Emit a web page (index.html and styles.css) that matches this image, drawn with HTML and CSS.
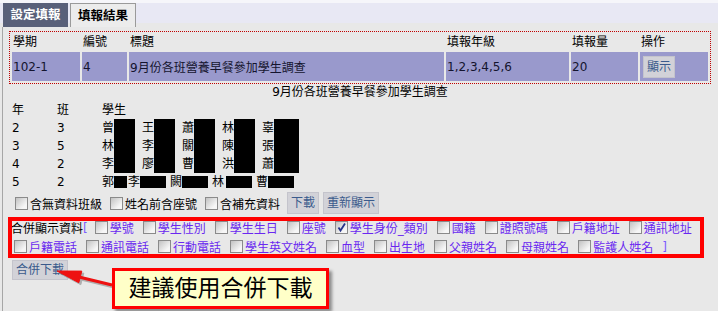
FILE: index.html
```html
<!DOCTYPE html>
<html>
<head>
<meta charset="utf-8">
<title>填報結果</title>
<link rel="stylesheet" href="styles.css">
</head>
<body>
<div class="tabs">
  <a class="tab" href="#set">設定填報</a>
  <a class="tab active" href="#result">填報結果</a>
</div>
<div class="panel">
  <table class="survey">
    <colgroup>
      <col class="c-term"><col class="c-no"><col class="c-title"><col class="c-grade"><col class="c-qty"><col class="c-op">
    </colgroup>
    <tr class="head">
      <td>學期</td><td>編號</td><td>標題</td><td>填報年級</td><td>填報量</td><td>操作</td>
    </tr>
    <tr class="data">
      <td>102-1</td><td>4</td><td>9月份各班營養早餐參加學生調查</td><td>1,2,3,4,5,6</td><td>20</td>
      <td><button class="btn">顯示</button></td>
    </tr>
  </table>

  <div class="caption">9月份各班營養早餐參加學生調查</div>

  <table class="students">
    <tr><td class="c-y">年</td><td class="c-y">班</td><td>學生</td></tr>
    <tr><td>2</td><td>3</td><td>
      <span class="nm">曾<i class="mask"></i></span><span class="nm">王<i class="mask"></i></span><span class="nm">蕭<i class="mask"></i></span><span class="nm">林<i class="mask"></i></span><span class="nm">辜<i class="mask wide"></i></span>
    </td></tr>
    <tr><td>3</td><td>5</td><td>
      <span class="nm">林<i class="mask"></i></span><span class="nm">李<i class="mask"></i></span><span class="nm">關<i class="mask"></i></span><span class="nm">陳<i class="mask"></i></span><span class="nm">張<i class="mask wide"></i></span>
    </td></tr>
    <tr><td>4</td><td>2</td><td>
      <span class="nm">李<i class="mask"></i></span><span class="nm">廖<i class="mask"></i></span><span class="nm">曹<i class="mask"></i></span><span class="nm">洪<i class="mask"></i></span><span class="nm">蕭<i class="mask wide"></i></span>
    </td></tr>
    <tr class="short"><td>5</td><td>2</td><td>
      <span class="nm s1">郭<i class="mask"></i></span><span class="nm s2">李<i class="mask"></i></span><span class="nm s2">闕<i class="mask"></i></span><span class="nm s3">林<i class="mask"></i></span><span class="nm s2">曹<i class="mask"></i></span>
    </td></tr>
  </table>

  <div class="opts">
    <label class="it"><span class="cb"></span>含無資料班級</label>
    <label class="it"><span class="cb"></span>姓名前含座號</label>
    <label class="it"><span class="cb"></span>含補充資料</label>
    <button class="btn tall">下載</button>
    <button class="btn tall">重新顯示</button>
  </div>

  <div class="merge">
    <div class="line first">
      <span class="lead">合併顯示資料</span><span class="br">[</span>
      <label class="it"><span class="cb"></span>學號</label>
      <label class="it"><span class="cb"></span>學生性別</label>
      <label class="it"><span class="cb"></span>學生生日</label>
      <label class="it"><span class="cb"></span>座號</label>
      <label class="it"><span class="cb on"><svg viewBox="0 0 11 11" width="11" height="11"><path d="M2.5 5.5 L4.5 8.5 L9 1.5" fill="none" stroke="#27348b" stroke-width="1.8"/></svg></span>學生身份_類別</label>
      <label class="it"><span class="cb"></span>國籍</label>
      <label class="it"><span class="cb"></span>證照號碼</label>
      <label class="it"><span class="cb"></span>戶籍地址</label>
      <label class="it"><span class="cb"></span>通訊地址</label>
    </div>
    <div class="line second">
      <label class="it"><span class="cb"></span>戶籍電話</label>
      <label class="it"><span class="cb"></span>通訊電話</label>
      <label class="it"><span class="cb"></span>行動電話</label>
      <label class="it"><span class="cb"></span>學生英文姓名</label>
      <label class="it"><span class="cb"></span>血型</label>
      <label class="it"><span class="cb"></span>出生地</label>
      <label class="it"><span class="cb"></span>父親姓名</label>
      <label class="it"><span class="cb"></span>母親姓名</label>
      <label class="it"><span class="cb"></span>監護人姓名</label>
      <span class="br">]</span>
    </div>
  </div>

  <button class="btn merge-dl">合併下載</button>
</div>

<!-- annotation -->
<svg class="arrow" viewBox="0 0 70 36" width="70" height="36">
  <g transform="translate(2 2)" fill="#8a8a8a" stroke="#8a8a8a" opacity="0.6">
    <polygon points="7,13 31.8,13.1 28.8,24.7"/>
    <line x1="29" y1="19" x2="62" y2="27" stroke-width="3"/>
  </g>
  <g fill="#ee1111" stroke="#ee1111">
    <polygon points="7,13 31.8,13.1 28.8,24.7"/>
    <line x1="29" y1="19" x2="62" y2="27" stroke-width="3"/>
  </g>
</svg>
<div class="callout">建議使用合併下載</div>
</body>
</html>
```

FILE: styles.css
```css
body {
    margin: 0;
    font: 12px "DejaVu Sans", "Noto Sans CJK TC", sans-serif;
    color: #000;
    background: #e8e8e8;
}

.tabs {
    display: flex;
    gap: 2px;
    height: 27px;
    padding: 3px 0 0 3px;
    box-sizing: border-box;
    background: linear-gradient(#f6f6fa 0 3px, #e8e8f4 3px 23px, #e8e8e8 23px);
}

.tab {
    display: block;
    width: 65px;
    height: 24px;
    line-height: 24px;
    text-align: center;
    font-weight: bold;
    font-size: 12.5px;
    text-decoration: none;
    color: #fff;
    background: #596079;
    box-sizing: border-box;
}

.tab.active {
    width: 66px;
    color: #000;
    background: #ececec;
    border: 1px solid #9a9a9a;
    border-bottom: none;
    line-height: 23px;
}

.panel {
    margin-left: 2px;
    border-left: 1px solid #a6a6a6;
    padding: 4px 0 0 6px;
    min-height: 284px;
    box-sizing: border-box;
    position: relative;
}

.survey {
    table-layout: fixed;
    width: 702px;
    border: 1px dotted #c00000;
    border-spacing: 2px;
}

.c-term { width: 68px; }
.c-no { width: 45px; }
.c-title { width: 315px; }
.c-grade { width: 123px; }
.c-qty { width: 67px; }
.c-op { width: 68px; }

.survey td {
    padding: 0 1px;
    white-space: nowrap;
}

.survey .head td {
    height: 16px;
    line-height: 16px;
}

.survey .data td {
    height: 29px;
    background: #9999cc;
    color: #14142e;
}

.survey .data .btn {
    margin-left: 2px;
}

.btn {
    font: 12px "DejaVu Sans", "Noto Sans CJK TC", sans-serif;
    color: #3a5a8c;
    background: #d2d2d8;
    border: 1px solid #c4c4cc;
    padding: 0 3px;
    height: 22px;
    line-height: 20px;
    cursor: pointer;
}

.caption {
    width: 702px;
    height: 17px;
    line-height: 17px;
    text-align: center;
}

.students {
    margin-left: 3px;
    border-spacing: 0;
}

.students td {
    padding: 0;
    height: 18px;
    line-height: 18px;
    white-space: nowrap;
    vertical-align: middle;
}

.students td:nth-child(1),
.students td:nth-child(2) {
    width: 45px;
}

.nm {
    display: inline-flex;
    align-items: center;
    width: 40px;
    height: 18px;
    vertical-align: top;
}

.mask {
    display: inline-block;
    width: 21px;
    height: 18px;
    background: #000;
}

.mask.wide { width: 25px; }

.short .mask { height: 12px; width: 26px; }
.short .nm { width: auto; }
.short .s1 .mask { width: 13px; }
.short .s1 { margin-right: 1px; }
.short .s2 { margin-right: 4px; }
.short .s3 .mask { margin-left: 2px; }
.short .s3 { margin-right: 4px; }

.opts {
    display: flex;
    align-items: center;
    height: 24px;
    padding-left: 6px;
}

.it {
    display: inline-flex;
    align-items: center;
    margin-right: 8px;
    white-space: nowrap;
}

.cb {
    display: inline-flex;
    align-items: center;
    justify-content: center;
    width: 13px;
    height: 13px;
    margin-right: 2px;
    box-sizing: border-box;
    border: 1px solid #8a8a8a;
    background: linear-gradient(135deg, #c2c2c2, #f6f6f6 75%);
}

.opts .tall {
    margin-right: 5px;
    margin-left: -1px;
}

.merge {
    position: relative;
    width: 694px;
    margin: 3px 0 0 1px;
}

.merge::after {
    content: "";
    position: absolute;
    top: -1px;
    bottom: -2px;
    left: -2px;
    right: 0;
    border: 4px solid #ff0000;
}

.line {
    display: flex;
    align-items: center;
    height: 19px;
    white-space: nowrap;
}

.line.first { padding-left: 1px; }
.line.second { padding-left: 4px; }

.line .it {
    color: #6a28f0;
    margin-right: 9px;
}

.lead { margin-right: 0; }

.br {
    color: #7a5cff;
    margin-right: 7px;
}

.merge-dl {
    display: block;
    height: 20px;
    line-height: 18px;
    margin: 4px 0 0 3px;
}

.arrow {
    position: absolute;
    left: 50px;
    top: 258px;
}

.callout {
    position: absolute;
    left: 112px;
    top: 268px;
    width: 217px;
    height: 41px;
    box-sizing: border-box;
    border: 3px solid #ff0000;
    background: #ffffc8;
    box-shadow: 3px 3px 3px rgba(0, 0, 0, 0.4);
    font-size: 23px;
    line-height: 35px;
    text-align: center;
    color: #000;
}
```
